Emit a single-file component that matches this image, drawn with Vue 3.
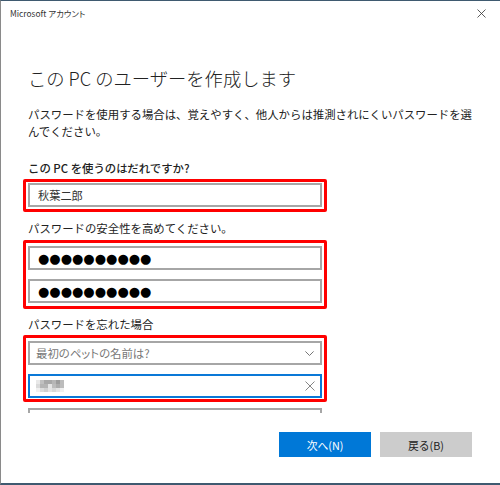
<script setup>
const labels = {
  title: 'この PC のユーザーを作成します',
  desc: 'パスワードを使用する場合は、覚えやすく、他人からは推測されにくいパスワードを選んでください。',
}
const dots = '●●●●●●●●●●'
// blurred answer text, drawn as 4px blocks
const mosaicRows = [
  ['#e8e8e8', '#c0c0c0', '#a8a8a8', '#a8a8a8', '#b6b6b6', '#9c9c9c', '#bcbcbc'],
  ['#dadada', '#b4b4b4', '#b4b4b4', '#e4e4e4', '#bcbcbc', '#acacac', '#bcbcbc'],
  ['#f0f0f0', '#dcdcdc', '#d0d0d0', '#e4e4e4', '#d8d8d8', '#e4e4e4', '#f0f0f0'],
]
</script>

<template>
  <div class="window">
    <div class="titlebar">
      <span class="window-title">Microsoft アカウント</span>
      <svg width="9" height="9" viewBox="0 0 9 9" fill="none">
        <path d="M0.5 0.5L8.5 8.5M8.5 0.5L0.5 8.5" stroke="#333" stroke-width="0.8" />
      </svg>
    </div>

    <div class="content">
      <h1 class="heading">{{ labels.title }}</h1>
      <p class="desc">{{ labels.desc }}</p>

      <div class="label label--first">この PC を使うのはだれですか?</div>
      <div class="mark mark--first">
        <div class="field"><span class="value">秋葉二郎</span></div>
      </div>

      <div class="label label--second">パスワードの安全性を高めてください。</div>
      <div class="mark mark--second">
        <div class="field"><span class="dots">{{ dots }}</span></div>
        <div class="field"><span class="dots">{{ dots }}</span></div>
      </div>

      <div class="label label--third">パスワードを忘れた場合</div>
      <div class="mark mark--third">
        <div class="field field--select">
          <span class="placeholder">最初のペットの名前は?</span>
          <svg width="9" height="5" viewBox="0 0 9 5" fill="none">
            <path d="M0.4 0.4L4.5 4.5L8.6 0.4" stroke="#666" stroke-width="0.9" />
          </svg>
        </div>
        <div class="field field--focus">
          <div class="mosaic">
            <div v-for="(row, r) in mosaicRows" :key="r" class="mosaic-row">
              <span
                v-for="(color, c) in row"
                :key="c"
                class="mosaic-cell"
                :style="{ background: color }"
              ></span>
            </div>
          </div>
          <svg width="10" height="10" viewBox="0 0 10 10" fill="none">
            <path d="M0.5 0.5L9.5 9.5M9.5 0.5L0.5 9.5" stroke="#777" stroke-width="0.9" />
          </svg>
        </div>
      </div>
      <div class="clipped"></div>
    </div>

    <div class="actions">
      <button class="btn btn--primary">次へ(N)</button>
      <button class="btn">戻る(B)</button>
    </div>
  </div>
</template>

<style scoped>
.window {
  box-sizing: border-box;
  width: 500px;
  height: 485px;
  background: #fff;
  border-top: 1px solid #3f5a70;
  border-left: 1px solid #8a8a8a;
  border-bottom: 2px solid #3f5a70;
  color: #222;
  font-family: "Noto Sans CJK JP", "Noto Sans", sans-serif;
  display: flex;
  flex-direction: column;
}
.titlebar {
  height: 24px;
  padding: 0 14px 0 9px;
  display: flex;
  align-items: center;
  justify-content: space-between;
  flex-shrink: 0;
}
.window-title {
  font-size: 8.4px;
  color: #333;
  font-feature-settings: "palt";
}
.content {
  height: 388px;
  overflow: hidden;
  padding: 0 27px;
  flex-shrink: 0;
}
.heading {
  margin: 38px 0 0;
  font-size: 18.3px;
  font-weight: 300;
  line-height: 30px;
  color: #222;
}
.desc {
  margin: 13px 0 0;
  font-size: 11.4px;
  line-height: 17px;
  width: 446px;
  color: #222;
}
.label {
  font-size: 11.4px;
  line-height: 18px;
  color: #222;
}
.label--first {
  margin-top: 19px;
  font-weight: 500;
}
.label--second {
  margin-top: 7px;
}
.label--third {
  margin-top: 6px;
}
.mark {
  box-sizing: border-box;
  width: 304px;
  margin-left: -5px;
  border: 3px solid #f00;
  border-radius: 2px;
  display: flex;
  flex-direction: column;
  gap: 9px;
}
.mark--first {
  margin-top: 2px;
  padding: 1px 2px 2px;
}
.mark--second {
  margin-top: 3px;
  padding: 3px 2px;
}
.mark--third {
  margin-top: 2px;
  padding: 3px 2px 1px;
}
.field {
  box-sizing: border-box;
  height: 24px;
  border: 2px solid #a6a6a6;
  background: #fff;
  display: flex;
  align-items: center;
  justify-content: space-between;
  padding: 0 6px 0 8px;
}
.field--select {
  padding-left: 6px;
}
.value {
  font-size: 11.2px;
  color: #333;
}
.dots {
  font-family: "DejaVu Sans", sans-serif;
  font-size: 13px;
  color: #000;
}
.placeholder {
  font-size: 11.4px;
  color: #777;
  font-feature-settings: "palt";
}
.field--focus {
  border-color: #0a78d7;
  padding-right: 5px;
}
.mosaic {
  margin-left: -2px;
  display: flex;
  flex-direction: column;
}
.mosaic-row {
  display: flex;
}
.mosaic-cell {
  width: 4px;
  height: 4px;
}
.clipped {
  box-sizing: border-box;
  width: 294px;
  height: 25px;
  border: 2px solid #a6a6a6;
  margin-top: 6px;
}
.actions {
  display: flex;
  justify-content: flex-end;
  gap: 9px;
  padding: 19px 28px 0 0;
}
.btn {
  width: 92px;
  height: 25px;
  border: 1px solid #ccc;
  background: #ccc;
  color: #222;
  font-family: inherit;
  font-size: 10.8px;
  padding: 0;
}
.btn--primary {
  background: #0078d7;
  border-color: #0078d7;
  color: #fff;
}
</style>
